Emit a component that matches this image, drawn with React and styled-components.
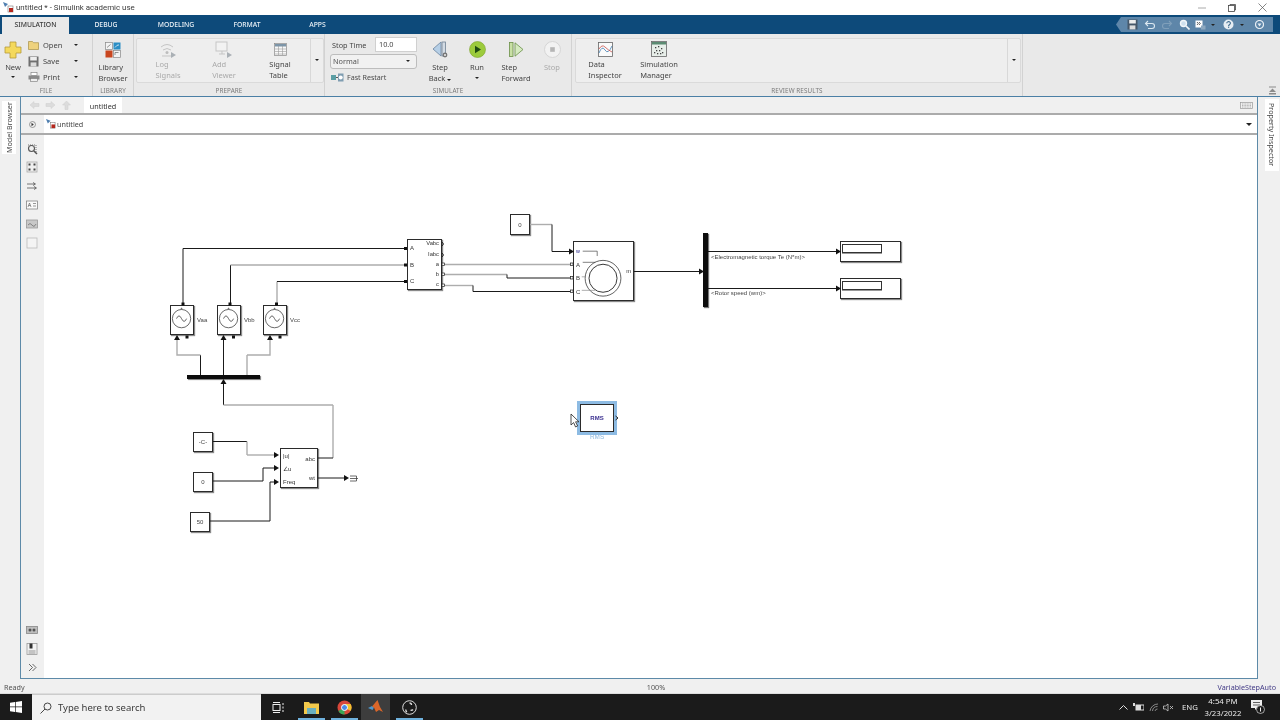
import React from 'react';
import styled, { createGlobalStyle } from 'styled-components';

const Global = createGlobalStyle`
  html, body { margin: 0; padding: 0; width: 1280px; height: 720px; overflow: hidden; background: #f0f0f0; }
  body { font-family: "Noto Sans", "Open Sans", sans-serif; }
  * { box-sizing: border-box; }
`;

const CX = 44, CY = 135;

const PinSlot = styled.div`position:absolute;right:3px;bottom:1px;display:flex;`;
const Page = styled.div`width:1280px;height:720px;display:flex;flex-direction:column;overflow:hidden;filter:blur(.3px);`;
const TitleBar = styled.div`height:15px;background:#fff;display:flex;align-items:center;padding-left:3px;gap:2px;font-family:Roboto,"Noto Sans",sans-serif;font-size:7.9px;color:#3a3a3a;`;
const TitleText = styled.span`flex:1;`;
const WinControls = styled.div`display:flex;align-items:center;width:96px;padding-left:3px;gap:0;`;
const WinBtn = styled.div`width:30px;height:15px;display:flex;align-items:center;justify-content:center;`;

const TabBar = styled.div`height:19px;background:#0d4a7a;display:flex;padding-left:2px;padding-top:2px;position:relative;`;
const Tab = styled.div`
  width:${p => p.$w}px;height:17px;display:flex;align-items:center;justify-content:center;padding-bottom:2px;
  font-size:6.8px;font-weight:500;letter-spacing:0;
  color:${p => p.$active ? '#3b3b3b' : '#e8eff5'};
  background:${p => p.$active ? '#e9e9e9' : 'transparent'};
`;
const QuickBar = styled.div`
  margin-left:auto;margin-right:7px;width:157px;height:15px;background:#5e86a9;display:flex;align-items:center;
  gap:0;padding-left:8px;clip-path:polygon(5px 0,100% 0,100% 100%,5px 100%,0 50%);
`;
const QuickIcon = styled.div`width:${p => p.$w || 17}px;display:flex;align-items:center;justify-content:center;`;

const Ribbon = styled.div`height:63px;background:#e9e9e9;display:flex;border-bottom:1px solid #4a7fa5;position:relative;`;
const Group = styled.div`width:${p => p.$w}px;height:62px;display:flex;flex-direction:column;border-right:1px solid #d2d2d2;`;
const GroupBody = styled.div`height:51px;display:flex;padding-top:${p => p.$pt ?? 3}px;padding-left:${p => p.$pl || 0}px;`;
const GroupLabel = styled.div`height:11px;line-height:12px;text-align:center;font-size:6.3px;color:#7a7a7a;letter-spacing:.1px;`;
const LargeBtn = styled.div`
  width:${p => p.$w}px;display:flex;flex-direction:column;align-items:center;
  font-size:7.5px;line-height:11px;color:${p => p.$off ? '#aaaaaa' : '#454545'};white-space:nowrap;
`;
const IconSlot = styled.div`height:${p => p.$h}px;display:flex;align-items:center;justify-content:center;`;
const Caret = styled.span`display:inline-block;width:0;height:0;border-left:${p => p.$s || 2.5}px solid transparent;border-right:${p => p.$s || 2.5}px solid transparent;border-top:${p => p.$s || 2.5}px solid #222;margin:${p => p.$m || '0'};`;
const FileCol = styled.div`width:66px;display:flex;flex-direction:column;padding-top:0;`;
const FileRow = styled.div`height:16px;display:flex;align-items:center;font-size:7.5px;color:#454545;padding-left:2px;`;
const FileName = styled.span`margin-left:${p => p.$ml ?? 4}px;width:31px;`;
const Gallery = styled.div`
  width:${p => p.$w}px;height:45px;margin-left:${p => p.$ml}px;margin-top:1px;background:#eeeeee;border:1px solid #dadada;border-radius:2px;
  display:flex;padding-left:${p => p.$pl}px;
`;
const GalleryMore = styled.div`margin-left:auto;width:13px;border-left:1px solid #d8d8d8;display:flex;align-items:center;justify-content:center;padding-bottom:2px;`;
const SimCol = styled.div`width:91px;display:flex;flex-direction:column;font-size:7.3px;color:#454545;`;
const StopRow = styled.div`display:flex;align-items:center;height:15px;padding-left:2px;`;
const StopLabel = styled.span`width:43px;`;
const StopInput = styled.div`width:42px;height:15px;background:#fff;border:1px solid #d0d0d0;padding-left:3px;line-height:12px;`;
const ModeSelect = styled.div`width:87px;height:15px;margin-top:2px;background:#f1f1f1;border:1px solid #bdbdbd;border-radius:3px;display:flex;align-items:center;justify-content:space-between;padding:0 6px 0 2px;color:#555;`;
const FastRow = styled.div`height:16px;margin-top:1px;display:flex;align-items:center;gap:3px;padding-left:1px;color:#4a4a4a;font-size:7.1px;`;

const Workspace = styled.div`flex:1;display:flex;background:#f0f0f0;min-height:0;`;
const SideRail = styled.div`width:${p => p.$w}px;padding:${p => p.$pad};`;
const SideTab = styled.div`
  width:14px;height:${p => p.$h}px;background:#fff;writing-mode:vertical-rl;transform:${p => p.$flip ? 'rotate(180deg)' : 'none'};
  display:flex;align-items:center;justify-content:center;font-size:7.2px;color:#444;white-space:nowrap;
`;
const Editor = styled.div`width:1238px;display:flex;flex-direction:column;border:1px solid #5d8aa8;border-top:0;background:#fff;`;
const EditorStrip = styled.div`height:18px;background:#f0f0f0;display:flex;align-items:flex-end;border-bottom:2px solid #ababab;padding-left:8px;`;
const NavIcons = styled.div`display:flex;width:55px;height:16px;align-items:center;gap:5px;`;
const DocTab = styled.div`width:38px;height:16px;background:#fff;text-align:center;font-size:7.2px;line-height:18px;color:#333;`;
const KeyIcon = styled.div`margin-left:auto;margin-right:4px;align-self:center;display:flex;`;
const AddressBar = styled.div`height:20px;background:#fff;display:flex;align-items:center;border-bottom:2px solid #ababab;`;
const AddressToggle = styled.div`width:23px;height:18px;background:#f0f0f0;display:flex;align-items:center;justify-content:center;`;
const AddressCrumb = styled.div`display:flex;align-items:center;gap:1px;padding-left:2px;font-size:7.2px;color:#444;flex:1;`;
const EditorBody = styled.div`flex:1;display:flex;min-height:0;`;
const Palette = styled.div`width:23px;background:#f0f0f0;display:flex;flex-direction:column;align-items:center;padding:8px 1px 2px 0;`;
const PaletteItem = styled.div`height:${p => p.$h || 18.8}px;flex:none;display:flex;align-items:center;justify-content:center;margin-top:${p => p.$mt || 0}px;`;
const PaletteSpacer = styled.div`flex:1;`;
const Canvas = styled.div`flex:1;position:relative;background:#fff;overflow:hidden;`;
const Wires = styled.svg`position:absolute;left:0;top:0;width:1213px;height:543px;`;

const Block = styled.div`
  position:absolute;left:${p => p.$x - CX}px;top:${p => p.$y - CY}px;width:${p => p.$w}px;height:${p => p.$h}px;
  background:#fff;border:1px solid #2b2b2b;box-shadow:1px 1px 1px #8a8a8a;
  font-family:"Liberation Sans",Arial,sans-serif;font-size:6px;color:#444;
  display:flex;align-items:center;justify-content:center;
`;
const SelectedBlock = styled(Block)`outline:3px solid #8dbbe3;color:#3a2f90;font-weight:700;`;
const Port = styled.span`
  position:absolute;${p => p.$right ? 'right:2px' : 'left:2px'};top:${p => p.$y}px;transform:translateY(-50%);
  font-family:"Liberation Sans",Arial,sans-serif;font-size:${p => p.$fs || 5.8}px;line-height:1;color:${p => p.$c || '#333'};white-space:nowrap;
`;
const Note = styled.span`
  position:absolute;left:${p => p.$x - CX}px;top:${p => p.$y - CY}px;transform:translateY(-50%);
  font-family:"Liberation Sans",Arial,sans-serif;font-size:${p => p.$fs || 6}px;line-height:1;color:${p => p.$c || '#444'};white-space:nowrap;
`;
const BusBar = styled.div`
  position:absolute;left:${p => p.$x - CX}px;top:${p => p.$y - CY}px;width:${p => p.$w}px;height:${p => p.$h}px;background:#0c0c0c;box-shadow:1px 1px 1px #777;
`;
const InnerField = styled.div`position:absolute;left:1px;top:2px;width:40px;height:9px;border:1px solid #333;box-shadow:0 1px 0 #999;`;
const BlockArt = styled.svg`position:absolute;left:0;top:0;width:100%;height:100%;`;
const Cursor = styled.svg`position:absolute;left:${570 - CX}px;top:${413 - CY}px;`;

const StatusBar = styled.div`height:15px;background:#f0f0f0;display:grid;grid-template-columns:1fr 1fr 1fr;align-items:center;font-size:7.2px;color:#555;padding:1px 4px 0;border-bottom:1px solid #ddd;`;
const StatusMid = styled.div`text-align:center;padding-left:32px;`;
const StatusRight = styled.div`text-align:right;color:#423a86;`;

const Taskbar = styled.div`height:26px;background:#1b1b1b;display:flex;align-items:stretch;color:#e8e8e8;`;
const StartBtn = styled.div`width:32px;display:flex;align-items:center;justify-content:center;`;
const SearchBox = styled.div`width:229px;background:#f2f2f2;display:flex;align-items:center;gap:6px;padding-left:8px;font-size:9.5px;color:#3a3a3a;border-top:1px solid #ccc;`;
const TaskIcon = styled.div`
  width:${p => p.$w}px;display:flex;align-items:center;justify-content:center;
  background:${p => p.$on ? '#3d3d3d' : 'transparent'};
  box-shadow:${p => p.$run ? 'inset 0 -2px 0 #6fb2de' : 'none'};margin-left:${p => p.$ml || 0}px;
`;
const Tray = styled.div`margin-left:auto;display:flex;align-items:center;font-size:7.8px;`;
const TrayItem = styled.div`width:${p => p.$w}px;padding-right:${p => p.$pr || 0}px;display:flex;align-items:center;justify-content:center;text-align:center;line-height:12px;white-space:nowrap;`;

/* ---------- icons ---------- */
const SimulinkMini = ({ s = 11 }) => (
  <svg width={s} height={s} viewBox="0 0 11 11">
    <path d="M0 0l5 2-3 3z" fill="#4f7fb0" />
    <rect x="5" y="4" width="5" height="6" fill="#fff" stroke="#777" strokeWidth=".6" />
    <rect x="6" y="6" width="4" height="4" fill="#b5271d" />
  </svg>
);
const NewIcon = () => (
  <svg width="18" height="18" viewBox="0 0 18 18">
    <path d="M6 1h6v5h5v6h-5v5H6v-5H1V6h5z" fill="#f4d95c" stroke="#b59a3a" strokeWidth=".8" />
  </svg>
);
const OpenIcon = () => (
  <svg width="11" height="10" viewBox="0 0 11 10">
    <path d="M.5 1.5h4l1 1.2h5v6.8H.5z" fill="#eed27e" stroke="#a89048" strokeWidth=".7" />
  </svg>
);
const SaveIcon = ({ c = '#6f6f6f' }) => (
  <svg width="11" height="11" viewBox="0 0 11 11">
    <rect x=".5" y=".5" width="10" height="10" fill={c} />
    <rect x="2.2" y="1" width="6.6" height="3.5" fill="#eee" />
    <rect x="2.6" y="6.4" width="5.8" height="4" fill="#ddd" />
  </svg>
);
const PrintIcon = () => (
  <svg width="12" height="10" viewBox="0 0 12 10">
    <rect x="3" y=".5" width="6" height="3" fill="#fff" stroke="#777" strokeWidth=".6" />
    <rect x=".5" y="3.5" width="11" height="4" fill="#8a8a8a" />
    <rect x="2.5" y="6.5" width="7" height="3" fill="#eee" stroke="#777" strokeWidth=".6" />
  </svg>
);
const LibraryIcon = () => (
  <svg width="16" height="16" viewBox="0 0 16 16">
    <rect x=".5" y=".5" width="7" height="7" fill="#f3f3f3" stroke="#888" strokeWidth=".7" />
    <path d="M2 5.5l3.5-3" stroke="#666" strokeWidth=".7" />
    <rect x="8.5" y=".5" width="7" height="7" fill="#2b8ec5" />
    <path d="M10 5.5q2-3 4-2.6" stroke="#fff" strokeWidth=".7" fill="none" />
    <rect x=".5" y="8.5" width="7" height="7" fill="#c9461f" />
    <rect x="8.5" y="8.5" width="7" height="7" fill="#f3f3f3" stroke="#888" strokeWidth=".7" />
    <path d="M10 13v-2.5h3.500" stroke="#666" strokeWidth=".7" fill="none" />
  </svg>
);
const LogSignalsIcon = () => (
  <svg width="18" height="17" viewBox="0 0 18 17" fill="none" stroke="#c5c5c5" strokeWidth="1">
    <path d="M2 6q6-5 12 0M4 9q4-3 8 0" />
    <circle cx="8" cy="11.500" r="1.500" fill="#bdbdbd" stroke="none" />
    <path d="M3 15h9" />
    <path d="M12 11l5 3-5 3z" fill="#aab0b5" stroke="none" />
  </svg>
);
const ViewerIcon = () => (
  <svg width="18" height="17" viewBox="0 0 18 17" fill="none" stroke="#c5c5c5" strokeWidth="1">
    <rect x="1" y="1" width="11" height="9" fill="#f2f2f2" />
    <path d="M4 13h6M7 10v3" />
    <path d="M12 11l5 3-5 3z" fill="#aab0b5" stroke="none" />
  </svg>
);
const TableIcon = () => (
  <svg width="13" height="13" viewBox="0 0 13 13">
    <rect x=".5" y=".5" width="12" height="12" fill="#f8f8f8" stroke="#888" strokeWidth=".7" />
    <rect x="1" y="1" width="11" height="2.500" fill="#7d95a8" />
    <path d="M1 6h11M1 8.500h11M1 11h11M4.500 3v9M8.500 3v9" stroke="#9a9a9a" strokeWidth=".6" />
  </svg>
);
const FastIcon = () => (
  <svg width="13" height="9" viewBox="0 0 13 9">
    <rect x="0" y="2" width="5" height="5" fill="#5a9ea4" />
    <path d="M5 4.500h3" stroke="#555" />
    <path d="M7 0.500h5.500v8H7z" fill="#7f9db1" />
    <circle cx="9.700" cy="4.500" r="2" fill="#fff" />
  </svg>
);
const StepBackIcon = () => (
  <svg width="16" height="17" viewBox="0 0 16 17">
    <path d="M1 8l8-7v14z" fill="#b6cfe6" stroke="#6a84a0" strokeWidth=".8" />
    <rect x="10" y="1" width="3.500" height="14" fill="#d3dbe3" stroke="#6f8193" strokeWidth=".8" />
    <circle cx="13" cy="14" r="2.400" fill="#777" />
    <circle cx="13" cy="14" r="1" fill="#eee" />
  </svg>
);
const RunIcon = () => (
  <svg width="17" height="17" viewBox="0 0 17 17">
    <circle cx="8.500" cy="8.500" r="8" fill="#9ccb3c" stroke="#7da22d" strokeWidth=".6" />
    <path d="M6 4.800l6 3.700-6 3.700z" fill="#1f4a12" />
  </svg>
);
const StepFwdIcon = () => (
  <svg width="15" height="15" viewBox="0 0 15 15">
    <rect x=".5" y=".5" width="3.500" height="14" fill="#c9e0a5" stroke="#6a9048" strokeWidth=".8" />
    <path d="M6 .8l8 6.700-8 6.700z" fill="#d5eac0" stroke="#6a9048" strokeWidth=".8" />
  </svg>
);
const StopIcon = () => (
  <svg width="17" height="17" viewBox="0 0 17 17">
    <circle cx="8.500" cy="8.500" r="8" fill="#f2f2f2" stroke="#d5d5d5" />
    <rect x="6.200" y="6.200" width="4.600" height="4.600" fill="#b5b5b5" />
  </svg>
);
const DataIcon = () => (
  <svg width="15" height="15" viewBox="0 0 15 15" fill="none">
    <rect x=".5" y=".5" width="14" height="14" fill="#fafafa" stroke="#666" strokeWidth=".8" />
    <path d="M1 11q3-8 6-3t7-4" stroke="#3f7cb0" strokeWidth=".8" />
    <path d="M1 7q3-5 6-2t7 5" stroke="#c9504a" strokeWidth=".8" />
  </svg>
);
const SimMgrIcon = () => (
  <svg width="16" height="16" viewBox="0 0 16 16">
    <rect x=".5" y=".5" width="15" height="15" fill="#e7eee9" stroke="#666" strokeWidth=".8" />
    <rect x="1" y="1" width="14" height="2.500" fill="#5b8b72" />
    {[[4, 6], [7, 5], [10, 7], [5, 9], [8, 9], [11, 11], [6, 12], [9, 12], [3, 11]].map(([x, y], i) => (
      <rect key={i} x={x} y={y} width="1.300" height="1.300" fill="#444" />
    ))}
  </svg>
);
const Undo = ({ c, flip }) => (
  <svg width="12" height="10" viewBox="0 0 12 10" fill="none" stroke={c} strokeWidth="1.100" style={flip ? { transform: 'scaleX(-1)' } : undefined}>
    <path d="M4 1L1.500 3.500 4 6M1.500 3.500H8a2.500 2.500 0 010 5H4" />
  </svg>
);
const SearchQ = () => (
  <svg width="11" height="11" viewBox="0 0 11 11" fill="none" stroke="#f2f6fa">
    <circle cx="4.500" cy="4.500" r="3" strokeWidth="1.400" fill="#cfe0ee" />
    <path d="M7 7l3.500 3.500" strokeWidth="1.600" />
  </svg>
);
const Help = () => (
  <svg width="11" height="11" viewBox="0 0 11 11">
    <circle cx="5.500" cy="5.500" r="5" fill="#e6edf3" />
    <path d="M3.800 4.200a1.800 1.600 0 113 1.200c-.6.500-1.200.7-1.200 1.500" stroke="#3e6a8d" strokeWidth="1.100" fill="none" />
    <rect x="5" y="7.600" width="1.200" height="1.200" fill="#3e6a8d" />
  </svg>
);
const Collapse = () => (
  <svg width="9" height="9" viewBox="0 0 9 9">
    <circle cx="4.500" cy="4.500" r="4" fill="none" stroke="#e6edf3" strokeWidth="1.200" />
    <path d="M2.500 3.500h4l-2 3z" fill="#e6edf3" />
  </svg>
);
const CommandIcon = () => (
  <svg width="11" height="10" viewBox="0 0 11 10">
    <rect x=".5" y=".5" width="7" height="7" fill="#fff" />
    <path d="M2 2l1.300 1.500L2 5M4 2l1.300 1.500L4 5" stroke="#222" strokeWidth=".7" fill="none" />
    <rect x="6" y="5.500" width="4.500" height="4" fill="#8da8bf" />
  </svg>
);
const PinUp = () => (
  <svg width="9" height="9" viewBox="0 0 9 9"><path d="M1 .5h7v1H1zM4.500 2.500L8 6H1zM1 7h7v1.500H1z" fill="#8b8b8b" /></svg>
);
const NavArrow = ({ d, c = '#dcdcdc' }) => (
  <svg width="11" height="10" viewBox="0 0 11 10"><path d={d} fill={c} stroke="#cfcfcf" strokeWidth=".5" /></svg>
);
const PaletteIcon = ({ children }) => (
  <svg width="12" height="12" viewBox="0 0 12 12" fill="none" stroke="#555" strokeWidth=".8">{children}</svg>
);

/* ---------- diagram data ---------- */
const K = '#1a1a1a', G = '#adadad';
const wires = [
  ['M183 305V248.500', K], ['M183 248.500H405', K],
  ['M230.500 305V265', K], ['M230.500 265H405', G],
  ['M277 305V281.500', G], ['M277 281.500H405', K],
  ['M200.500 375V355', K], ['M200.500 355H177V338', G],
  ['M223.500 375V338', K],
  ['M247 375V355', G], ['M247 355H270V338', G],
  ['M223.500 405V381', K], ['M223.500 405H333', G], ['M333 405V458', G], ['M333 458H318', K],
  ['M213 441.500H247', K], ['M247 441.500V455', G], ['M247 455H275', G],
  ['M213 481H263V468H275', K],
  ['M210 521H270V482H275', K],
  ['M318 478H345', K],
  ['M530 224.500H552', G], ['M552 224.500V251.500H570', K],
  ['M443 264.500H572', G],
  ['M443 274.500H507', G], ['M507 274.500V278H572', K],
  ['M443 285.500H473', G], ['M473 285.500V291.500H572', K],
  ['M634 271.500H700', K],
  ['M708 251.500H837', K], ['M708 288.500H837', K],
];
const arrowsRight = [[275, 455], [275, 468], [275, 482], [345, 478], [570, 251.5], [700, 271.5], [837, 251.5], [837, 288.5]];
const arrowsUp = [[177, 337], [223.5, 337], [270, 337], [223.5, 381]];
const squares = [
  [404, 247], [404, 263.5], [404, 280],
  [181.500, 302.500], [228.500, 302.500], [275, 302.500],
  [185.500, 335.500], [232, 335.500], [278.500, 335.500],
];
const openPorts = [[442, 263], [442, 273], [442, 284], [570.500, 263], [570.500, 276.500], [570.500, 290]];

const SineSource = ({ x, label }) => (
  <>
    <Block $x={x} $y={305} $w={24} $h={30}>
      <BlockArt viewBox="0 0 24 30">
        <circle cx="11.500" cy="13.500" r="10" fill="none" stroke="#333" strokeWidth=".8" />
        <path d="M6 13.500q2.700-6 5.500 0t5.500 0" fill="none" stroke="#333" strokeWidth=".8" />
        <path d="M10.500 2.500h2M11.500 1.500v2" stroke="#333" strokeWidth=".5" />
      </BlockArt>
    </Block>
    <Note $x={x + 27} $y={320}>{label}</Note>
  </>
);

export default function App() {
  return (
    <Page>
      <Global />
      <TitleBar>
        <SimulinkMini />
        <TitleText>untitled * - Simulink academic use</TitleText>
        <WinControls>
          <WinBtn><svg width="8" height="8" viewBox="0 0 8 8"><path d="M0 4h8" stroke="#aaa" /></svg></WinBtn>
          <WinBtn><svg width="8" height="8" viewBox="0 0 8 8" fill="none" stroke="#444" strokeWidth=".8"><rect x=".5" y="1.500" width="6" height="6" /><path d="M2 1.500V.500h5.500V6h-1" /></svg></WinBtn>
          <WinBtn><svg width="9" height="9" viewBox="0 0 9 9"><path d="M.5.500l8 8M8.500.500l-8 8" stroke="#555" strokeWidth=".7" /></svg></WinBtn>
        </WinControls>
      </TitleBar>

      <TabBar>
        <Tab $w={67} $active>SIMULATION</Tab>
        <Tab $w={74}>DEBUG</Tab>
        <Tab $w={66}>MODELING</Tab>
        <Tab $w={76}>FORMAT</Tab>
        <Tab $w={65}>APPS</Tab>
        <QuickBar>
          <QuickIcon $w={18}><SaveIcon c="#46586a" /></QuickIcon>
          <QuickIcon><Undo c="#dbe7f0" /></QuickIcon>
          <QuickIcon><Undo c="#7f9fba" flip /></QuickIcon>
          <QuickIcon><SearchQ /></QuickIcon>
          <QuickIcon><CommandIcon /></QuickIcon>
          <QuickIcon $w={8}><Caret /></QuickIcon>
          <QuickIcon $w={22}><Help /></QuickIcon>
          <QuickIcon $w={6}><Caret /></QuickIcon>
          <QuickIcon $w={28}><Collapse /></QuickIcon>
        </QuickBar>
      </TabBar>

      <Ribbon>
        <Group $w={93}>
          <GroupBody>
            <LargeBtn $w={26}>
              <IconSlot $h={25}><NewIcon /></IconSlot>
              New
              <Caret $m="3px 0 0" />
            </LargeBtn>
            <FileCol>
              <FileRow><OpenIcon /><FileName>Open</FileName><Caret /></FileRow>
              <FileRow><SaveIcon /><FileName>Save</FileName><Caret /></FileRow>
              <FileRow><PrintIcon /><FileName $ml={3}>Print</FileName><Caret /></FileRow>
            </FileCol>
          </GroupBody>
          <GroupLabel>FILE</GroupLabel>
        </Group>
        <Group $w={41}>
          <GroupBody>
            <LargeBtn $w={40}>
              <IconSlot $h={25}><LibraryIcon /></IconSlot>
              Library
              <br />
              Browser
            </LargeBtn>
          </GroupBody>
          <GroupLabel>LIBRARY</GroupLabel>
        </Group>
        <Group $w={191}>
          <GroupBody $pt={3}>
            <Gallery $w={189} $ml={2} $pl={3}>
              <LargeBtn $w={56} $off><IconSlot $h={20}><LogSignalsIcon /></IconSlot>Log<br />Signals</LargeBtn>
              <LargeBtn $w={56} $off><IconSlot $h={20}><ViewerIcon /></IconSlot>Add<br />Viewer</LargeBtn>
              <LargeBtn $w={56}><IconSlot $h={20}><TableIcon /></IconSlot>Signal<br />Table</LargeBtn>
              <GalleryMore><Caret /></GalleryMore>
            </Gallery>
          </GroupBody>
          <GroupLabel>PREPARE</GroupLabel>
        </Group>
        <Group $w={247}>
          <GroupBody $pl={5}>
            <SimCol>
              <StopRow><StopLabel>Stop Time</StopLabel><StopInput>10.0</StopInput></StopRow>
              <ModeSelect>Normal<Caret /></ModeSelect>
              <FastRow><FastIcon />Fast Restart</FastRow>
            </SimCol>
            <LargeBtn $w={38}><IconSlot $h={25}><StepBackIcon /></IconSlot>Step<span>Back <Caret /></span></LargeBtn>
            <LargeBtn $w={36}><IconSlot $h={25}><RunIcon /></IconSlot>Run<Caret $m="4px 0 0" /></LargeBtn>
            <LargeBtn $w={42}><IconSlot $h={25}><StepFwdIcon /></IconSlot>Step<br />Forward</LargeBtn>
            <LargeBtn $w={30} $off><IconSlot $h={25}><StopIcon /></IconSlot>Stop</LargeBtn>
          </GroupBody>
          <GroupLabel>SIMULATE</GroupLabel>
        </Group>
        <Group $w={451}>
          <GroupBody>
            <Gallery $w={446} $ml={3} $pl={4}>
              <LargeBtn $w={50}><IconSlot $h={20}><DataIcon /></IconSlot>Data<br />Inspector</LargeBtn>
              <LargeBtn $w={58}><IconSlot $h={20}><SimMgrIcon /></IconSlot>Simulation<br />Manager</LargeBtn>
              <GalleryMore><Caret /></GalleryMore>
            </Gallery>
          </GroupBody>
          <GroupLabel>REVIEW RESULTS</GroupLabel>
        </Group>
        <PinSlot><PinUp /></PinSlot>
      </Ribbon>

      <Workspace>
        <SideRail $w={20} $pad="4px 0 0 2px"><SideTab $h={53} $flip>Model Browser</SideTab></SideRail>
        <Editor>
          <EditorStrip>
            <NavIcons>
              <NavArrow d="M1 5l4-3.500V3.500h5v3H5v2z" />
              <NavArrow d="M10 5L6 1.500V3.500H1v3h5v2z" />
              <NavArrow d="M5.500 1L9.500 5h-2.500v4.500h-3V5H1.500z" />
            </NavIcons>
            <DocTab>untitled</DocTab>
            <KeyIcon>
              <svg width="13" height="7" viewBox="0 0 13 7" fill="none" stroke="#999" strokeWidth=".7"><rect x=".5" y=".5" width="12" height="6" /><path d="M2 2h9M2 3.500h9M2 5h9" strokeDasharray="1 .6" /></svg>
            </KeyIcon>
          </EditorStrip>
          <AddressBar>
            <AddressToggle>
              <svg width="7" height="7" viewBox="0 0 7 7"><circle cx="3.500" cy="3.500" r="3" fill="#eee" stroke="#666" strokeWidth=".6" /><path d="M2.500 1.800l2.300 1.700-2.300 1.700z" fill="#333" /></svg>
            </AddressToggle>
            <AddressCrumb><SimulinkMini s={10} />untitled</AddressCrumb>
            <Caret $s={3.5} $m="0 5px 0 0" />
          </AddressBar>
          <EditorBody>
            <Palette>
              <PaletteItem $h={11}><PaletteIcon><path d="M2 2h8v8" strokeDasharray="1 1" /><circle cx="5.500" cy="5.500" r="3" strokeWidth="1.100" /><path d="M8 8l3 3" strokeWidth="1.500" /></PaletteIcon></PaletteItem>
              <PaletteItem $mt={4}><PaletteIcon><rect x="1" y="1" width="10" height="10" fill="#efefef" stroke="#aaa" /><path d="M2.500 2.500h2v2h-2zM7.500 2.500h2v2h-2zM2.500 7.500h2v2h-2zM7.500 7.500h2v2h-2z" fill="#444" stroke="none" /></PaletteIcon></PaletteItem>
              <PaletteItem><PaletteIcon><path d="M1 4h8M7 2.500L9.500 4 7 5.500M1 8h9M8 6.500L10.500 8 8 9.500" /></PaletteIcon></PaletteItem>
              <PaletteItem><PaletteIcon><rect x=".5" y="2" width="11" height="8" fill="#fafafa" stroke="#888" /><path d="M2 8l1.500-4L5 8M2.600 6.500h1.800M7 4.500h3M7 7h3" strokeWidth=".6" /></PaletteIcon></PaletteItem>
              <PaletteItem><PaletteIcon><rect x=".5" y="2" width="11" height="8" fill="#c8c8c8" stroke="#999" /><path d="M2 7q2-3 4 0t4-1" strokeWidth=".6" /></PaletteIcon></PaletteItem>
              <PaletteItem><PaletteIcon><rect x="1" y="1" width="10" height="10" fill="#f4f4f4" stroke="#bbb" /></PaletteIcon></PaletteItem>
              <PaletteSpacer />
              <PaletteItem><PaletteIcon><rect x=".5" y="2.500" width="11" height="7" fill="#bdbdbd" stroke="#888" /><circle cx="4" cy="6" r="1.500" fill="#555" stroke="none" /><circle cx="8" cy="6" r="1.500" fill="#555" stroke="none" /></PaletteIcon></PaletteItem>
              <PaletteItem><PaletteIcon><rect x="1" y=".5" width="10" height="11" fill="#f4f4f4" stroke="#999" /><rect x="3.500" y=".5" width="3" height="5" fill="#333" stroke="none" /><path d="M2.500 8h7M2.500 10h7" strokeWidth=".6" /></PaletteIcon></PaletteItem>
              <PaletteItem $h={18}><svg width="9" height="9" viewBox="0 0 9 9" fill="none" stroke="#444" strokeWidth=".8"><path d="M1 1l3.500 3.500L1 8M4.500 1L8 4.500 4.500 8" /></svg></PaletteItem>
            </Palette>
            <Canvas>
              <SineSource x={170} label="Vaa" />
              <SineSource x={217} label="Vbb" />
              <SineSource x={263} label="Vcc" />
              <BusBar $x={187} $y={375} $w={73} $h={4} />

              <Block $x={407} $y={239} $w={35} $h={51}>
                <Port $y={8} $fs={6}>A</Port><Port $y={25} $fs={6}>B</Port><Port $y={41} $fs={6}>C</Port>
                <Port $right $y={4}>Vabc</Port><Port $right $y={15}>Iabc</Port><Port $right $y={25}>a</Port><Port $right $y={35}>b</Port><Port $right $y={45}>c</Port>
              </Block>

              <Block $x={510} $y={214} $w={20} $h={21}>0</Block>
              <Block $x={573} $y={241} $w={61} $h={60}>
                <BlockArt viewBox="0 0 61 60">
                  <circle cx="30" cy="37.500" r="18.500" fill="none" stroke="#333" strokeWidth=".8" />
                  <circle cx="30" cy="37.500" r="14.500" fill="none" stroke="#333" strokeWidth="1" />
                  <path d="M9 9.500h15v5M9 21h13" fill="none" stroke="#444" strokeWidth=".7" />
                  <path d="M8 36h4M8 50h14" fill="none" stroke="#888" strokeWidth=".7" />
                </BlockArt>
                <Port $y={10} $fs={5.4} $c="#2a2a8a">w</Port>
                <Port $y={23} $fs={6}>A</Port><Port $y={36} $fs={6}>B</Port><Port $y={50} $fs={6}>C</Port>
                <Port $right $y={30}>m</Port>
              </Block>

              <BusBar $x={703} $y={233} $w={5} $h={74} />
              <Note $x={711} $y={256.5}>&lt;Electromagnetic torque Te (N*m)&gt;</Note>
              <Note $x={711} $y={293}>&lt;Rotor speed (wm)&gt;</Note>

              <Block $x={840} $y={241} $w={61} $h={21}><InnerField /></Block>
              <Block $x={840} $y={278} $w={61} $h={21}><InnerField /></Block>

              <Block $x={193} $y={432} $w={20} $h={20}>-C-</Block>
              <Block $x={193} $y={472} $w={20} $h={20}>0</Block>
              <Block $x={190} $y={512} $w={20} $h={20}>50</Block>
              <Block $x={280} $y={448} $w={38} $h={40}>
                <Port $y={7} $fs={6}>|u|</Port><Port $y={20} $fs={6}>∠u</Port><Port $y={33} $fs={6}>Freq</Port>
                <Port $right $y={10} $fs={6}>abc</Port><Port $right $y={29} $fs={6}>wt</Port>
              </Block>

              <SelectedBlock $x={580} $y={404} $w={34} $h={28}>RMS</SelectedBlock>
              <Note $x={590} $y={437} $fs={6.4} $c="#8ab7df">RMS</Note>

              <Wires viewBox={`${CX} ${CY} 1213 543`}>
                {wires.map(([d, c], i) => <path key={i} d={d} fill="none" stroke={c} strokeWidth={c === G ? 1.4 : 1} />)}
                {arrowsRight.map(([x, y], i) => <path key={i} d={`M${x - 1} ${y - 3}L${x + 4} ${y}L${x - 1} ${y + 3}z`} fill="#111" />)}
                {arrowsUp.map(([x, y], i) => <path key={i} d={`M${x - 3} ${y + 3}L${x} ${y - 2}L${x + 3} ${y + 3}z`} fill="#111" />)}
                {squares.map(([x, y], i) => <rect key={i} x={x} y={y} width="3" height="3" fill="#111" />)}
                {openPorts.map(([x, y], i) => <rect key={i} x={x} y={y} width="2.500" height="2.500" fill="#fff" stroke="#222" strokeWidth=".7" />)}
                <path d="M350 476h6.500v5H350M350 478.500h8" fill="none" stroke="#444" strokeWidth=".8" />
                <path d="M615.500 416l2.500 2-2.500 2" fill="none" stroke="#222" />
                <path d="M442 242l1.500 2-1.500 2M442 253l1.500 2-1.500 2" fill="none" stroke="#222" />
              </Wires>
              <Cursor width="10" height="15" viewBox="0 0 10 15">
                <path d="M1 1v11l2.600-2.400 2 4.400 2-1-2-4.200H9z" fill="#fff" stroke="#222" strokeWidth=".8" />
              </Cursor>
            </Canvas>
          </EditorBody>
        </Editor>
        <SideRail $w={22} $pad="2px 0 0 7px"><SideTab $h={72}>Property Inspector</SideTab></SideRail>
      </Workspace>

      <StatusBar>
        <div>Ready</div>
        <StatusMid>100%</StatusMid>
        <StatusRight>VariableStepAuto</StatusRight>
      </StatusBar>

      <Taskbar>
        <StartBtn>
          <svg width="12" height="12" viewBox="0 0 12 12" fill="#fff"><path d="M0 1.700L5 1v4.600H0zM5.700.900L12 0v5.600H5.700zM0 6.300h5V11l-5-.700zM5.700 6.300H12V12l-6.300-.9z" /></svg>
        </StartBtn>
        <SearchBox>
          <svg width="12" height="12" viewBox="0 0 12 12" fill="none" stroke="#333" strokeWidth=".9"><circle cx="7.500" cy="4.500" r="3.500" /><path d="M5 7l-4.500 4.500" /></svg>
          Type here to search
        </SearchBox>
        <TaskIcon $w={33}>
          <svg width="12" height="11" viewBox="0 0 12 11" fill="none" stroke="#eee"><rect x="1" y="2.500" width="7" height="6" /><path d="M1 .5h7M1 10.500h7M11 1v2M11 4.500v2M11 8v2" /></svg>
        </TaskIcon>
        <TaskIcon $w={27} $run $ml={4}>
          <svg width="15" height="13" viewBox="0 0 15 13"><path d="M0 1h5l1 1.500h9V13H0z" fill="#f2c94c" /><rect x="3" y="7" width="9" height="6" fill="#6bb0bf" /></svg>
        </TaskIcon>
        <TaskIcon $w={27} $run $ml={6}>
          <svg width="15" height="15" viewBox="0 0 15 15">
            <circle cx="7.500" cy="7.500" r="7" fill="#d8473a" />
            <path d="M7.500 7.500L1.400 11a7 7 0 006.100 3.500z" fill="#3aa757" />
            <path d="M7.500 7.500L13.600 11a7 7 0 00.0-7H7.500z" fill="#f2c230" />
            <circle cx="7.500" cy="7.500" r="3" fill="#4a8be8" stroke="#fff" />
          </svg>
        </TaskIcon>
        <TaskIcon $w={29} $on $ml={3}>
          <svg width="15" height="14" viewBox="0 0 15 14"><path d="M0 8l4-2 2 1.500L4.500 10z" fill="#4f95c9" /><path d="M4 6.500L9.500 0 12 7l3 5-4-2-3 2-2-4.500z" fill="#d9662a" /></svg>
        </TaskIcon>
        <TaskIcon $w={27} $run $ml={6}>
          <svg width="15" height="15" viewBox="0 0 15 15" fill="none" stroke="#ddd"><circle cx="7.500" cy="7.500" r="6.800" /><path d="M7.500 3a2 2 0 012 2M4 9.500a2 2 0 001 2.500M11 9.500a2 2 0 01-2.500.500" strokeWidth="1.400" /></svg>
        </TaskIcon>
        <Tray>
          <TrayItem $w={16}><svg width="9" height="6" viewBox="0 0 9 6" fill="none" stroke="#ddd"><path d="M.5 5.500l4-4 4 4" /></svg></TrayItem>
          <TrayItem $w={15}><svg width="11" height="8" viewBox="0 0 11 8" fill="#ddd"><rect x="3" y="2" width="8" height="5" fill="none" stroke="#ddd" /><rect x="3" y="2" width="5" height="5" /><path d="M0 0h2v3H0z" /></svg></TrayItem>
          <TrayItem $w={15}><svg width="10" height="9" viewBox="0 0 10 9" fill="none" stroke="#888"><path d="M1 8a8 8 0 018-7M3.500 8a5 5 0 015-4.500M6 8a2.500 2.500 0 012.500-2" /></svg></TrayItem>
          <TrayItem $w={15}><svg width="11" height="9" viewBox="0 0 11 9" fill="none" stroke="#ccc" strokeWidth=".8"><path d="M.5 3v3h2L5 8V1L2.500 3zM7 3l3 3M10 3L7 6" /></svg></TrayItem>
          <TrayItem $w={28}>ENG</TrayItem>
          <TrayItem $w={38}>4:54 PM<br />3/23/2022</TrayItem>
          <TrayItem $w={38} $pr={6}>
            <svg width="14" height="14" viewBox="0 0 14 14"><path d="M0 0h11v8H6L4 10V8H0z" fill="#eee" /><path d="M2 2.500h7M2 5h7" stroke="#222" strokeWidth=".7" /><circle cx="9.500" cy="9.500" r="4" fill="#1b1b1b" stroke="#ddd" strokeWidth=".7" /><path d="M9.500 7.500v4" stroke="#eee" /></svg>
          </TrayItem>
        </Tray>
      </Taskbar>
    </Page>
  );
}
